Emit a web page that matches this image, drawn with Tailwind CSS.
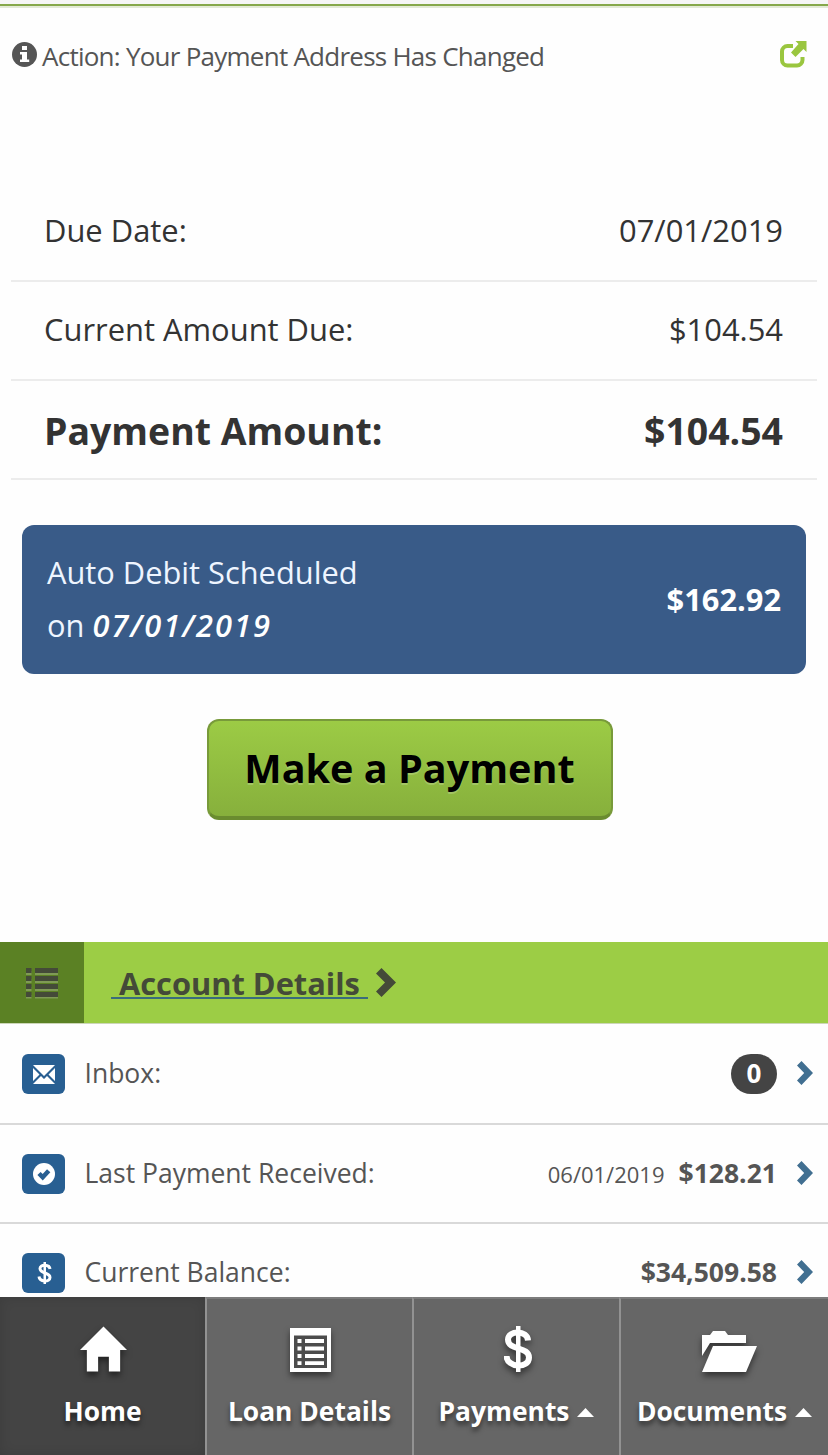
<!DOCTYPE html>
<html lang="en">

<head>
  <meta charset="UTF-8">
  <meta name="viewport" content="width=device-width, initial-scale=1.0">
  <title>Account Home</title>
  <script src="https://cdn.jsdelivr.net/npm/@tailwindcss/browser@4"></script>
</head>

<body class="bg-[#fefefe]">
  <div class="flex h-[1455px] w-[828px] flex-col overflow-hidden font-['Open_Sans','Noto_Sans',sans-serif] text-[#333]">

    <!-- Header edge -->
    <div class="h-[8px] shrink-0 border-b-2 border-[#e3ead6] bg-[#f6f6f6] pt-[4px]">
      <div class="h-[2px] bg-[#86a84b]"></div>
    </div>

    <!-- Alert -->
    <div class="flex h-[174px] shrink-0 items-start justify-between pt-[30px] pr-[21px] pl-[12px] text-[#555]">
      <div class="flex items-center gap-[5px]">
        <svg class="-mt-[3px] size-[25px]" viewBox="0 0 25 25">
          <circle cx="12.5" cy="12.5" r="12.5" fill="#555" />
          <path d="M10 4h5v4h-5zM8 10h7v7.500h2.200V20H8v-2.500h2v-5H8z" fill="#fefefe" />
        </svg>
        <span class="text-[26px] leading-[36px] tracking-[-0.75px]">Action: Your Payment Address Has Changed</span>
      </div>
      <svg class="mt-[3px] h-[28px] w-[28px]" viewBox="0 0 28 28">
        <path d="M14 5H8.500A5.500 5.500 0 0 0 3 10.500v8.500a5.500 5.500 0 0 0 5.500 5.500h9.500a5.500 5.500 0 0 0 5.500-5.500V16" fill="none" stroke="#9ac63f" stroke-width="4" />
        <path d="M16.500 0H27.500v11l-3-3-8 8-4.500-4.500L19.500 3z" fill="#9ac63f" />
      </svg>
    </div>

    <!-- Amounts -->
    <div class="mx-[11px] shrink-0 text-[30.9px]">
      <div class="flex h-[100px] items-center justify-between border-b-2 border-[#ececec] pr-[34px] pb-[2px] pl-[33px]">
        <span>Due Date:</span>
        <span>07/01/2019</span>
      </div>
      <div class="flex h-[99px] items-center justify-between border-b-2 border-[#ececec] pr-[34px] pb-[3px] pl-[33px]">
        <span>Current Amount Due:</span>
        <span>$104.54</span>
      </div>
      <div class="flex h-[99px] items-center justify-between border-b-2 border-[#ececec] pt-[4px] pr-[34px] pl-[33px] text-[37.4px] font-bold">
        <span>Payment Amount:</span>
        <span>$104.54</span>
      </div>
    </div>

    <!-- Auto debit -->
    <div class="mt-[45px] mr-[22px] ml-[22px] flex h-[149px] shrink-0 items-center justify-between rounded-[12px] bg-[#395b88] pr-[25px] pl-[25px] text-[30.8px] text-white">
      <div class="-mt-px leading-[53px] text-[#eef5ff]">
        Auto Debit Scheduled<br>
        on <em class="font-semibold tracking-[2px] text-white">07/01/2019</em>
      </div>
      <span class="font-bold">$162.92</span>
    </div>

    <button class="mt-[45px] ml-[207px] h-[101px] w-[406px] shrink-0 rounded-[12px] border-2 border-b-4 border-[#789a3a] border-b-[#6a8c2f] bg-linear-to-b from-[#9ccb45] to-[#87b03c] pr-px text-[39.6px] font-bold text-black [text-shadow:0_2px_0_rgba(255,255,255,0.2)]">Make a Payment</button>

    <!-- Account details -->
    <div class="mt-[122px] flex h-[82px] shrink-0 items-center border-b border-[#ccd6b8] bg-[#9ccd45]">
      <div class="flex h-full w-[84px] items-center justify-center bg-[#5b8124]">
        <svg class="mt-[2px] h-[31px] w-[32px]" viewBox="0 0 32 31">
          <path d="M0 3h5.500v4H0zM9 3h23v4H9zM0 11h5.500v4H0zM9 11h23v4H9zM0 19h5.500v4H0zM9 19h23v4H9zM0 27h5.500v3.500H0zM9 27h23v3.500H9z" fill="#7f9a55" />
          <path d="M0 0h5.500v5H0zM9 0h23v5H9zM0 8h5.500v5H0zM9 8h23v5H9zM0 16h5.500v5H0zM9 16h23v5H9zM0 24h5.500v5H0zM9 24h23v5H9z" fill="#444a38" />
        </svg>
      </div>
      <a href="#" class="ml-[27px] flex items-center text-[30.8px] font-bold text-[#444a38]">
        <span class="h-[32px] border-b-2 border-[#3a6c7c] leading-[33px] whitespace-pre"> Account Details </span>
        <svg class="ml-[8px] h-[29px] w-[20px]" viewBox="0 0 20 29">
          <path d="M5.500 0L20 14.500 5.500 29 0 23.500l9-9-9-9z" fill="#444a38" />
        </svg>
      </a>
    </div>

    <div class="h-[273px] shrink-0 overflow-hidden text-[26.5px] text-[#555]">
      <div class="flex h-[101px] items-center border-b-2 border-[#d9d9d9] pt-px pr-[15px] pl-[22px]">
        <div class="flex h-[40px] w-[43px] items-center justify-center rounded-[6px] bg-[#285f92]">
          <svg class="h-[19px] w-[22px]" viewBox="0 0 22 19">
            <path d="M0 0h22L11 11zM0 3l6.500 6.500L0 16zM22 3v13l-6.500-6.500zM8 11l3 3 3-3 8 8H0z" fill="#fff" />
          </svg>
        </div>
        <span class="ml-[19.5px] flex-1">Inbox:</span>
        <span class="flex h-[40px] w-[46px] items-center justify-center rounded-full bg-[#444] pb-px text-[26px] font-bold text-white">0</span>
        <svg class="-mt-[2px] ml-[20px] h-[24px] w-[16px]" viewBox="0 0 16 24">
          <path d="M4.500 0L16 12 4.500 24 0 19.500 7.200 12 0 4.500z" fill="#416f91" />
        </svg>
      </div>
      <div class="flex h-[99px] items-center border-b-2 border-[#d9d9d9] pr-[15px] pl-[22px]">
        <div class="flex h-[40px] w-[43px] items-center justify-center rounded-[6px] bg-[#285f92]">
          <svg class="size-[22px]" viewBox="0 0 22 22">
            <circle cx="11" cy="11" r="11" fill="#fff" />
            <path d="M6 10.500l3.700 3.700 6-6.500" fill="none" stroke="#285f92" stroke-width="4.500" />
          </svg>
        </div>
        <span class="ml-[19.5px] flex-1">Last Payment Received:</span>
        <span class="mt-px mr-[14px] text-[22px]">06/01/2019</span>
        <span class="font-bold">$128.21</span>
        <svg class="-mt-[2px] ml-[20px] h-[24px] w-[16px]" viewBox="0 0 16 24">
          <path d="M4.500 0L16 12 4.500 24 0 19.500 7.200 12 0 4.500z" fill="#416f91" />
        </svg>
      </div>
      <div class="flex h-[99px] items-center border-b-2 border-[#d9d9d9] pr-[15px] pl-[22px]">
        <div class="flex h-[40px] w-[43px] items-center justify-center rounded-[6px] bg-[#285f92]">
          <svg class="ml-[3px] h-[22px] w-[16px]" viewBox="0 0 30 44">
            <path d="M25 14C24 4 5 4 5 13c0 11 20 7 20 18 0 10-21 9-22-2" fill="none" stroke="#fff" stroke-width="6" />
            <path d="M12 0h5v44h-5z" fill="#fff" />
          </svg>
        </div>
        <span class="ml-[19.5px] flex-1">Current Balance:</span>
        <span class="font-bold">$34,509.58</span>
        <svg class="-mt-[2px] ml-[20px] h-[24px] w-[16px]" viewBox="0 0 16 24">
          <path d="M4.500 0L16 12 4.500 24 0 19.500 7.200 12 0 4.500z" fill="#416f91" />
        </svg>
      </div>
    </div>

    <!-- Bottom nav -->
    <nav class="grid h-[158px] shrink-0 grid-cols-[205px_207px_207px_209px] bg-[#666] text-[26.4px] font-bold text-white [text-shadow:0_4px_5px_rgba(0,0,0,0.5)]">
      <a href="#" class="flex flex-col items-center bg-[#444] pt-[29px] shadow-[inset_0_0_12px_rgba(0,0,0,0.12)]">
        <svg class="ml-[2px] h-[46px] w-[47px] drop-shadow-[0_4px_3px_rgba(0,0,0,0.5)]" viewBox="0 0 48 46">
          <path d="M24 0l24 24h-7v22H29.500V31h-11v15H7V24H0z" fill="#fff" />
        </svg>
        <span class="mt-[21px] leading-[36px]">Home</span>
      </a>
      <a href="#" class="flex flex-col items-center border-t-2 border-l-2 border-t-[#7c7c7c] border-l-[#929292] pt-[29px]">
        <svg class="ml-[2px] h-[44px] w-[41px] drop-shadow-[0_4px_3px_rgba(0,0,0,0.5)]" viewBox="0 0 41 44">
          <path d="M0 0h41v44H0z" fill="#fff" />
          <path d="M4 7.500h33V40H4z" fill="#4c4c4c" />
          <path d="M7.500 11h4v4h-4zM15 11h19v4H15zM7.500 18.500h4v4h-4zM15 18.500h19v4H15zM7.500 26h4v4h-4zM15 26h19v4H15zM7.500 33.300h4v3.700h-4zM15 33.300h19V37H15z" fill="#fff" />
        </svg>
        <span class="mt-[21px] leading-[36px]">Loan Details</span>
      </a>
      <a href="#" class="flex flex-col items-center border-t-2 border-l-2 border-t-[#7c7c7c] border-l-[#929292] pt-[27px]">
        <svg class="ml-[2px] h-[46px] w-[28px] drop-shadow-[0_4px_3px_rgba(0,0,0,0.5)]" viewBox="0 0 28 46">
          <path d="M24 14.500C23.500 4 4 4 4 13.500c0 11.500 21 6.500 21 18 0 11.500-22 10.500-22.500-1.500" fill="none" stroke="#fff" stroke-width="6" />
          <path d="M12 0h4.500v46H12z" fill="#fff" />
        </svg>
        <span class="mt-[21px] flex items-center gap-[8px] leading-[36px]">Payments
          <svg class="mt-[3px] h-[9px] w-[17px]" viewBox="0 0 17 9"><path d="M8.500 0L17 9H0z" fill="#fff" /></svg>
        </span>
      </a>
      <a href="#" class="flex flex-col items-center border-t-2 border-l-2 border-t-[#7c7c7c] border-l-[#929292] pt-[32px]">
        <svg class="ml-[9px] h-[41px] w-[55px] drop-shadow-[0_4px_3px_rgba(0,0,0,0.5)]" viewBox="0 0 55 41">
          <path d="M0 4h8l3-4h12l3 4h18v8H8L0 25z" fill="#fff" />
          <path d="M11 15h44L44 41H0z" fill="#fff" />
        </svg>
        <span class="mt-[21px] flex items-center gap-[8px] leading-[36px]">Documents
          <svg class="mt-[3px] h-[9px] w-[17px]" viewBox="0 0 17 9"><path d="M8.500 0L17 9H0z" fill="#fff" /></svg>
        </span>
      </a>
    </nav>
  </div>
</body>

</html>
